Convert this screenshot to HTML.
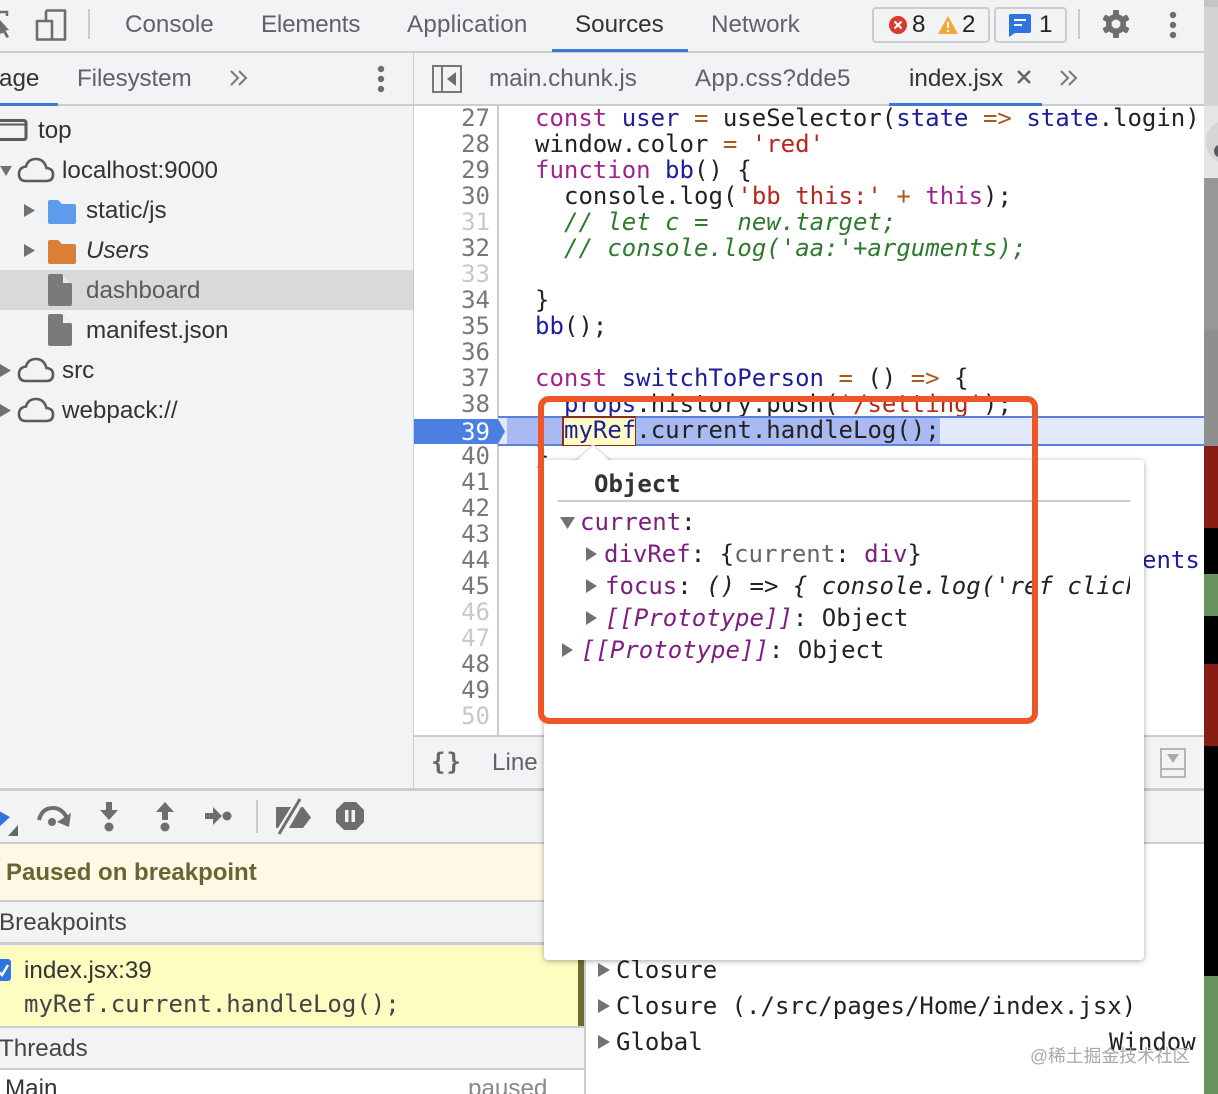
<!DOCTYPE html>
<html><head><meta charset="utf-8">
<style>
html,body{margin:0;padding:0;width:1218px;height:1094px;overflow:hidden;background:#fff}
#r{position:relative;width:1218px;height:1094px;overflow:hidden;font-family:"Liberation Sans",sans-serif;font-size:24.2px;color:#5f6368}
#r div,#r svg{position:absolute}
.t{white-space:pre;line-height:28px;height:28px;margin-top:1px}
.m{font-family:"DejaVu Sans Mono","Liberation Mono",monospace;font-size:24px;line-height:26px;height:26px;white-space:pre;color:#222}
.n{color:#777;left:414px;width:76px;text-align:right}
.l{color:#c8c8c8}
.k{color:#a0238f}.b{color:#1c1e9a}.o{color:#a85a1c}.s{color:#b5281c}.c{color:#2e7a2e;font-style:italic}.p{color:#7e1f80}.g{color:#666}
.i{font-style:italic}
.h{background:#ccc}
</style></head><body><div id="r">

<!-- panel backgrounds -->
<div style="left:0;top:0;width:1204px;height:106px;background:#f1f3f4"></div>
<div class="h" style="left:0;top:51px;width:1204px;height:2px"></div>
<div class="h" style="left:0;top:104px;width:1204px;height:2px"></div>
<div style="left:0;top:106px;width:413px;height:682px;background:#f1f3f4"></div>
<div class="h" style="left:413px;top:53px;width:1px;height:736px"></div>

<!-- top tabs -->
<svg style="left:0;top:10px" width="12" height="30" viewBox="0 0 12 30"><path d="M0 2H7V6M0 22H3" fill="none" stroke="#6e6e6e" stroke-width="2.5"/><path d="M0 10L9 20L5.500 20.500L9 27L6.500 28L3 22L0 24Z" fill="#6e6e6e"/></svg>
<svg style="left:34px;top:8px" width="34" height="34" viewBox="0 0 34 34"><path d="M12 2.500H31V31.500H3V13H18V31" fill="none" stroke="#6e6e6e" stroke-width="2.600" stroke-linejoin="round"/><path d="M12 2.500V13" stroke="#6e6e6e" stroke-width="2.600"/></svg>
<div class="h" style="left:88px;top:9px;width:2px;height:30px"></div>
<div class="t" style="left:125px;top:10px">Console</div>
<div class="t" style="left:261px;top:10px;letter-spacing:-.2px">Elements</div>
<div class="t" style="left:407px;top:10px;letter-spacing:.2px">Application</div>
<div class="t" style="left:575px;top:10px;color:#333">Sources</div>
<div class="t" style="left:711px;top:10px">Network</div>
<div style="left:552px;top:49px;width:136px;height:3px;background:#3b78d8"></div>

<div style="left:872px;top:7px;width:114px;height:32px;border:2px solid #ccc;border-radius:4px"></div>
<div style="left:994px;top:7px;width:69px;height:32px;border:2px solid #ccc;border-radius:4px"></div>
<svg style="left:888px;top:15px" width="20" height="20" viewBox="0 0 20 20"><circle cx="10" cy="10" r="9" fill="#d93a30"/><path d="M6.500 6.500L13.500 13.500M13.500 6.500L6.500 13.500" stroke="#fff" stroke-width="2"/></svg>
<div class="t" style="left:912px;top:10px;color:#222">8</div>
<svg style="left:937px;top:15px" width="22" height="20" viewBox="0 0 22 20"><path d="M11 1L21 19H1Z" fill="#f2a93b"/><path d="M11 7V13M11 15V17" stroke="#fff" stroke-width="2"/></svg>
<div class="t" style="left:962px;top:10px;color:#222">2</div>
<svg style="left:1008px;top:13px" width="24" height="24" viewBox="0 0 24 24"><path d="M3 1H21Q23 1 23 3V18Q23 20 21 20H7L1 24V3Q1 1 3 1Z" fill="#2f74e0"/><path d="M6 7H18M6 12H14" stroke="#fff" stroke-width="2"/></svg>
<div class="t" style="left:1039px;top:10px;color:#222">1</div>
<div class="h" style="left:1078px;top:9px;width:2px;height:30px"></div>
<svg style="left:1101px;top:9px" width="30" height="30" viewBox="0 0 30 30"><g fill="#6e6e6e"><circle cx="15" cy="15" r="10"/><rect x="12" y="1" width="6" height="28" rx="1"/><rect x="12" y="1" width="6" height="28" rx="1" transform="rotate(60 15 15)"/><rect x="12" y="1" width="6" height="28" rx="1" transform="rotate(120 15 15)"/></g><circle cx="15" cy="15" r="4.500" fill="#f1f3f4"/></svg>
<svg style="left:1167px;top:11px" width="12" height="30" viewBox="0 0 12 30"><g fill="#6e6e6e"><circle cx="6" cy="4" r="3.200"/><circle cx="6" cy="14" r="3.200"/><circle cx="6" cy="24" r="3.200"/></g></svg>

<!-- second row -->
<div class="t" style="left:-1px;top:64px;color:#333">age</div>
<div style="left:0;top:103px;width:58px;height:3px;background:#3b78d8"></div>
<div class="t" style="left:77px;top:64px;letter-spacing:-.1px">Filesystem</div>
<svg style="left:229px;top:68px" width="20" height="20" viewBox="0 0 20 20"><path d="M2 3L9 10L2 17M10 3L17 10L10 17" fill="none" stroke="#777" stroke-width="2"/></svg>
<svg style="left:375px;top:64px" width="12" height="30" viewBox="0 0 12 30"><g fill="#6e6e6e"><circle cx="6" cy="5" r="3.200"/><circle cx="6" cy="15" r="3.200"/><circle cx="6" cy="25" r="3.200"/></g></svg>
<svg style="left:431px;top:64px" width="32" height="30" viewBox="0 0 32 30"><rect x="2" y="2" width="28" height="26" fill="none" stroke="#777" stroke-width="2"/><path d="M11 2V28" stroke="#777" stroke-width="2"/><path d="M25 8V22L16 15Z" fill="#6e6e6e"/></svg>
<div class="t" style="left:489px;top:64px">main.chunk.js</div>
<div class="t" style="left:695px;top:64px;letter-spacing:.2px">App.css?dde5</div>
<div class="t" style="left:909px;top:64px;color:#333">index.jsx</div>
<svg style="left:1016px;top:69px" width="16" height="16" viewBox="0 0 16 16"><path d="M2 2L14 14M14 2L2 14" stroke="#666" stroke-width="2.600"/></svg>
<svg style="left:1059px;top:68px" width="20" height="20" viewBox="0 0 20 20"><path d="M2 3L9 10L2 17M10 3L17 10L10 17" fill="none" stroke="#777" stroke-width="2"/></svg>
<div style="left:889px;top:103px;width:153px;height:3px;background:#3b78d8"></div>

<!-- tree -->
<div style="left:0;top:270px;width:413px;height:40px;background:#d9d9d9"></div>
<svg style="left:0;top:118px" width="28" height="24" viewBox="0 0 28 24"><rect x="-3" y="2.500" width="29" height="19" rx="2" fill="none" stroke="#5a5a5a" stroke-width="3"/><path d="M0 6.500H26" stroke="#5a5a5a" stroke-width="2"/></svg>
<div class="t" style="left:38px;top:116px;color:#333">top</div>
<svg style="left:0;top:166px" width="12" height="10" viewBox="0 0 12 10"><path d="M0 0H12L6 10Z" fill="#727272"/></svg>
<svg style="left:17px;top:157px" width="38" height="26" viewBox="0 0 38 26"><path id="cl" d="M9 24H29Q36 24 36 17.500Q36 11.500 29.500 11Q27 2 19 2Q11 2 9 9.500Q2 10.500 2 17Q2 24 9 24Z" fill="none" stroke="#5a5a5a" stroke-width="2.600"/></svg>
<div class="t" style="left:62px;top:156px;color:#333">localhost:9000</div>
<svg style="left:24px;top:204px" width="11" height="13" viewBox="0 0 11 13"><path d="M0 0L11 6.500L0 13Z" fill="#727272"/></svg>
<svg style="left:48px;top:200px" width="28" height="24" viewBox="0 0 28 24"><path d="M2 0H10L14 4H26Q28 4 28 6V22Q28 24 26 24H2Q0 24 0 22V2Q0 0 2 0Z" fill="#5e9bea"/></svg>
<div class="t" style="left:86px;top:196px;color:#333">static/js</div>
<svg style="left:24px;top:244px" width="11" height="13" viewBox="0 0 11 13"><path d="M0 0L11 6.500L0 13Z" fill="#727272"/></svg>
<svg style="left:48px;top:240px" width="28" height="24" viewBox="0 0 28 24"><path d="M2 0H10L14 4H26Q28 4 28 6V22Q28 24 26 24H2Q0 24 0 22V2Q0 0 2 0Z" fill="#d97f37"/></svg>
<div class="t i" style="left:86px;top:236px;color:#333">Users</div>
<svg style="left:48px;top:274px" width="24" height="32" viewBox="0 0 24 32"><path d="M2 0H14L24 10V30Q24 32 22 32H2Q0 32 0 30V2Q0 0 2 0Z" fill="#7a7a7a"/><path d="M15 1L23 9H15Z" fill="#e8e8e8"/></svg>
<div class="t" style="left:86px;top:276px;color:#5a5a5a">dashboard</div>
<svg style="left:48px;top:314px" width="24" height="32" viewBox="0 0 24 32"><path d="M2 0H14L24 10V30Q24 32 22 32H2Q0 32 0 30V2Q0 0 2 0Z" fill="#7a7a7a"/><path d="M15 1L23 9H15Z" fill="#f1f3f4"/></svg>
<div class="t" style="left:86px;top:316px;color:#333">manifest.json</div>
<svg style="left:0;top:364px" width="11" height="13" viewBox="0 0 11 13"><path d="M0 0L11 6.500L0 13Z" fill="#727272"/></svg>
<svg style="left:17px;top:357px" width="38" height="26" viewBox="0 0 38 26"><path d="M9 24H29Q36 24 36 17.500Q36 11.500 29.500 11Q27 2 19 2Q11 2 9 9.500Q2 10.500 2 17Q2 24 9 24Z" fill="none" stroke="#5a5a5a" stroke-width="2.600"/></svg>
<div class="t" style="left:62px;top:356px;color:#333">src</div>
<svg style="left:0;top:404px" width="11" height="13" viewBox="0 0 11 13"><path d="M0 0L11 6.500L0 13Z" fill="#727272"/></svg>
<svg style="left:17px;top:397px" width="38" height="26" viewBox="0 0 38 26"><path d="M9 24H29Q36 24 36 17.500Q36 11.500 29.500 11Q27 2 19 2Q11 2 9 9.500Q2 10.500 2 17Q2 24 9 24Z" fill="none" stroke="#5a5a5a" stroke-width="2.600"/></svg>
<div class="t" style="left:62px;top:396px;color:#333">webpack://</div>

<!-- editor -->
<div style="left:414px;top:106px;width:790px;height:629px;background:#fff;overflow:hidden">
</div>
<div class="h" style="left:497px;top:106px;width:2px;height:629px"></div>

<div class="m n" style="top:105px">27</div>
<div class="m n" style="top:131px">28</div>
<div class="m n" style="top:157px">29</div>
<div class="m n" style="top:183px">30</div>
<div class="m n l" style="top:209px">31</div>
<div class="m n" style="top:235px">32</div>
<div class="m n l" style="top:261px">33</div>
<div class="m n" style="top:287px">34</div>
<div class="m n" style="top:313px">35</div>
<div class="m n" style="top:339px">36</div>
<div class="m n" style="top:365px">37</div>
<div class="m n" style="top:391px">38</div>
<div class="m n" style="top:443px">40</div>
<div class="m n" style="top:469px">41</div>
<div class="m n" style="top:495px">42</div>
<div class="m n" style="top:521px">43</div>
<div class="m n" style="top:547px">44</div>
<div class="m n" style="top:573px">45</div>
<div class="m n l" style="top:599px">46</div>
<div class="m n l" style="top:625px">47</div>
<div class="m n" style="top:651px">48</div>
<div class="m n" style="top:677px">49</div>
<div class="m n l" style="top:703px">50</div>

<div class="m" style="left:535px;top:105px"><span class="k">const</span> <span class="b">user</span> <span class="o">=</span> useSelector(<span class="b">state</span> <span class="o">=&gt;</span> <span class="b">state</span>.login)</div>
<div class="m" style="left:535px;top:131px">window.color <span class="o">=</span> <span class="s">'red'</span></div>
<div class="m" style="left:535px;top:157px"><span class="k">function</span> <span class="b">bb</span>() {</div>
<div class="m" style="left:564px;top:183px">console.log(<span class="s">'bb this:'</span> <span class="o">+</span> <span class="k">this</span>);</div>
<div class="m c" style="left:564px;top:209px">// let c =  new.target;</div>
<div class="m c" style="left:564px;top:235px">// console.log('aa:'+arguments);</div>
<div class="m" style="left:535px;top:287px">}</div>
<div class="m" style="left:535px;top:313px"><span class="b">bb</span>();</div>
<div class="m" style="left:535px;top:365px"><span class="k">const</span> <span class="b">switchToPerson</span> <span class="o">=</span> () <span class="o">=&gt;</span> {</div>
<div class="m" style="left:564px;top:391px"><span class="b">props</span>.history.push(<span class="s">'/setting'</span>);</div>
<div class="m" style="left:1142px;top:547px;width:60px;overflow:hidden"><span class="b">ents</span></div>
<div class="m" style="left:535px;top:443px">}</div>

<!-- line 39 highlight -->
<div style="left:498px;top:417px;width:706px;height:28px;background:#e3e8fa;border-top:0"></div>
<div style="left:498px;top:416px;width:706px;height:2px;background:#5a80dc"></div>
<div style="left:498px;top:444px;width:706px;height:2px;background:#5a80dc"></div>
<div style="left:507px;top:418px;width:433px;height:26px;background:#a9b9f2"></div>
<div style="left:562px;top:416px;width:71px;height:27px;background:#fdfcc4;border:2px solid #8a2a20;border-right-width:1px;border-bottom-width:1px"></div>
<div class="m" style="left:564px;top:417px"><span class="b">myRef</span>.current.handleLog();</div>
<svg style="left:414px;top:419px" width="92" height="25" viewBox="0 0 92 25"><path d="M0 0H84L91 12.500L84 25H0Z" fill="#4b80e3"/></svg>
<div class="m n" style="top:419px;color:#fff">39</div>

<!-- editor status bar -->
<div class="h" style="left:414px;top:735px;width:790px;height:2px"></div>
<div style="left:414px;top:737px;width:790px;height:51px;background:#f1f3f4"></div>
<div class="m" style="left:431px;top:749px;color:#666;font-weight:bold;font-size:24px;letter-spacing:1px">{}</div>
<div class="t" style="left:492px;top:748px">Line</div>
<svg style="left:1159px;top:747px" width="28" height="32" viewBox="0 0 28 32"><rect x="2" y="2" width="24" height="28" fill="none" stroke="#b5b5b5" stroke-width="2"/><path d="M2 22H26" stroke="#b5b5b5" stroke-width="2"/><path d="M8 7H20L14 16Z" fill="#aaa"/></svg>

<!-- lower half -->
<div class="h" style="left:0;top:788px;width:1204px;height:3px"></div>
<div style="left:0;top:791px;width:1204px;height:51px;background:#f1f3f4"></div>
<div class="h" style="left:0;top:842px;width:1204px;height:2px"></div>
<div style="left:0;top:844px;width:584px;height:250px;background:#f1f3f4"></div>
<div style="left:0;top:844px;width:584px;height:56px;background:#fef9e5"></div>
<div style="left:6px;top:859px;font-size:24px;font-weight:bold;color:#6d6332;white-space:pre;line-height:28px">Paused on breakpoint</div>
<div class="h" style="left:0;top:900px;width:584px;height:2px"></div>
<div class="t" style="left:-1px;top:908px;color:#444">Breakpoints</div>
<div class="h" style="left:0;top:942px;width:584px;height:3px"></div>
<div style="left:0;top:946px;width:578px;height:80px;background:#fdfdc2"></div>
<div style="left:578px;top:946px;width:6px;height:80px;background:#6f6b33"></div>
<div class="h" style="left:0;top:1026px;width:584px;height:2px"></div>
<svg style="left:0;top:958px" width="12" height="24" viewBox="0 0 12 24"><rect x="-10" y="1" width="21" height="22" rx="3" fill="#2f74e0"/><path d="M-2 13L2 17L8 7" fill="none" stroke="#fff" stroke-width="2.500"/></svg>
<div class="t" style="left:24px;top:956px;color:#333">index.jsx:39</div>
<div class="m" style="left:24px;top:991px;color:#444">myRef.current.handleLog();</div>
<div class="t" style="left:-1px;top:1034px;color:#444">Threads</div>
<div class="h" style="left:0;top:1068px;width:584px;height:2px"></div>
<div style="left:0;top:1070px;width:584px;height:24px;background:#fff"></div>
<div class="t" style="left:5px;top:1074px;color:#333">Main</div>
<div class="t" style="left:468px;top:1074px;color:#888">paused</div>
<div class="h" style="left:584px;top:844px;width:2px;height:250px"></div>

<!-- debug toolbar icons -->
<svg style="left:0;top:806px" width="20" height="32" viewBox="0 0 20 32"><path d="M-8 1L10 11L-2 22H-8Z" fill="#2f74e0"/><path d="M18 19V30H8Z" fill="#666"/></svg>
<svg style="left:35px;top:802px" width="38" height="28" viewBox="0 0 38 28"><path d="M4 18Q7 6 18 6Q27 6 32 16" fill="none" stroke="#6e6e6e" stroke-width="4"/><path d="M36 11L34 25L22 20Z" fill="#6e6e6e"/><circle cx="17" cy="20" r="4" fill="#6e6e6e"/></svg>
<svg style="left:99px;top:802px" width="20" height="30" viewBox="0 0 20 30"><path d="M7 0H13V8H19L10 18L1 8H7Z" fill="#6e6e6e"/><circle cx="10" cy="25" r="4.500" fill="#6e6e6e"/></svg>
<svg style="left:155px;top:802px" width="20" height="30" viewBox="0 0 20 30"><path d="M10 0L19 10H13V18H7V10H1Z" fill="#6e6e6e"/><circle cx="10" cy="25" r="4.500" fill="#6e6e6e"/></svg>
<svg style="left:205px;top:805px" width="28" height="22" viewBox="0 0 28 22"><path d="M0 8H8V2L17 11L8 20V14H0Z" fill="#6e6e6e"/><circle cx="22" cy="11" r="4.500" fill="#6e6e6e"/></svg>
<div class="h" style="left:256px;top:800px;width:2px;height:33px"></div>
<svg style="left:274px;top:798px" width="38" height="38" viewBox="0 0 38 38"><path d="M2 9H17L4 30H2Z M15 30L27 9L29 9L37 19.500L29 30Z" fill="#6e6e6e"/><path d="M26 1L5 36" stroke="#6e6e6e" stroke-width="3"/></svg>
<svg style="left:336px;top:802px" width="28" height="28" viewBox="0 0 28 28"><path d="M8 0H20L28 8V20L20 28H8L0 20V8Z" fill="#6e6e6e"/><rect x="9" y="8" width="3.500" height="12" fill="#f1f3f4"/><rect x="15.500" y="8" width="3.500" height="12" fill="#f1f3f4"/></svg>

<!-- scope -->
<svg style="left:598px;top:963px" width="12" height="14" viewBox="0 0 12 14"><path d="M0 0L12 7L0 14Z" fill="#727272"/></svg>
<svg style="left:598px;top:999px" width="12" height="14" viewBox="0 0 12 14"><path d="M0 0L12 7L0 14Z" fill="#727272"/></svg>
<svg style="left:598px;top:1035px" width="12" height="14" viewBox="0 0 12 14"><path d="M0 0L12 7L0 14Z" fill="#727272"/></svg>
<div class="m" style="left:616px;top:957px">Closure</div>
<div class="m" style="left:616px;top:993px">Closure (./src/pages/Home/index.jsx)</div>
<div class="m" style="left:616px;top:1029px">Global</div>
<div class="m" style="left:1109px;top:1029px">Window</div>
<div style="left:1030px;top:1045px;font-size:17.800px;line-height:22px;color:#a8a8a8;white-space:pre;font-family:'Liberation Sans','Noto Sans CJK SC',sans-serif">@稀土掘金技术社区</div>

<!-- scrollbar-like edge -->
<div style="left:1204px;top:0;width:14px;height:7px;background:#c4c4c4"></div>
<div style="left:1204px;top:7px;width:14px;height:99px;background:#d3d3d3"></div>
<div style="left:1204px;top:106px;width:14px;height:72px;background:#e6e6e6"></div>
<div style="left:1206px;top:122px;width:30px;height:40px;border-radius:50%;background:#d4d6d8"></div>
<div style="left:1214px;top:145px;width:10px;height:12px;border-radius:50%;background:#55585c"></div>
<div style="left:1204px;top:178px;width:14px;height:152px;background:#979797"></div>
<div style="left:1204px;top:330px;width:14px;height:116px;background:#8f8f8f"></div>
<div style="left:1204px;top:446px;width:14px;height:82px;background:#861c14"></div>
<div style="left:1204px;top:528px;width:14px;height:46px;background:#000"></div>
<div style="left:1204px;top:574px;width:14px;height:42px;background:#68945f"></div>
<div style="left:1204px;top:616px;width:14px;height:48px;background:#000"></div>
<div style="left:1204px;top:664px;width:14px;height:82px;background:#861c14"></div>
<div style="left:1204px;top:746px;width:14px;height:230px;background:#000"></div>
<div style="left:1204px;top:976px;width:14px;height:118px;background:#68945f"></div>

<!-- popover -->
<svg style="left:572px;top:444px" width="46" height="18" viewBox="0 0 46 18"><path d="M2 17L21 1L40 17Z" fill="#fff" stroke="#e2e2e2" stroke-width="1.500"/></svg>
<div style="left:544px;top:460px;width:600px;height:500px;background:#fff;border-radius:4px;box-shadow:0 1px 6px rgba(0,0,0,.35)"></div>
<svg style="left:574px;top:450px" width="40" height="14" viewBox="0 0 40 14"><path d="M0 14L19 0L38 14Z" fill="#fff"/></svg>
<div class="m" style="left:594px;top:471px;font-weight:bold;color:#333">Object</div>
<div class="h" style="left:558px;top:500px;width:572px;height:2px"></div>
<svg style="left:560px;top:517px" width="15" height="12" viewBox="0 0 15 12"><path d="M0 0H15L7.500 12Z" fill="#727272"/></svg>
<div class="m" style="left:580px;top:509px"><span class="p">current</span>:</div>
<svg style="left:586px;top:547px" width="11" height="14" viewBox="0 0 11 14"><path d="M0 0L11 7L0 14Z" fill="#727272"/></svg>
<div class="m" style="left:604px;top:541px"><span class="p">divRef</span>: {<span class="g">current</span>: <span class="p">div</span>}</div>
<svg style="left:586px;top:579px" width="11" height="14" viewBox="0 0 11 14"><path d="M0 0L11 7L0 14Z" fill="#727272"/></svg>
<div class="m" style="left:605px;top:573px;width:525px;overflow:hidden"><span class="p">focus</span>: <span class="i">() =&gt; { console.log('ref click')</span></div>
<svg style="left:586px;top:611px" width="11" height="14" viewBox="0 0 11 14"><path d="M0 0L11 7L0 14Z" fill="#727272"/></svg>
<div class="m" style="left:605px;top:605px"><span class="p i">[[Prototype]]</span>: Object</div>
<svg style="left:562px;top:643px" width="11" height="14" viewBox="0 0 11 14"><path d="M0 0L11 7L0 14Z" fill="#727272"/></svg>
<div class="m" style="left:581px;top:637px"><span class="p i">[[Prototype]]</span>: Object</div>

<!-- red annotation -->
<div style="left:538px;top:396px;width:488px;height:316px;border:6px solid #ee5527;border-radius:11px"></div>

</div></body></html>
